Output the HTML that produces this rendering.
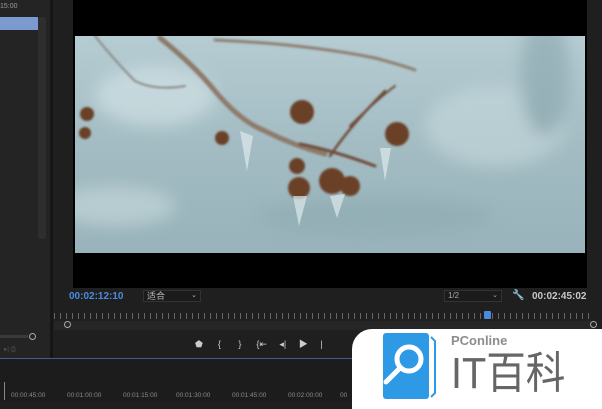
<!DOCTYPE html>
<html><head><meta charset="utf-8"><style>
*{margin:0;padding:0;box-sizing:border-box}
body{width:602px;height:402px;background:#1f1f1f;position:relative;overflow:hidden;font-family:"Liberation Sans","Noto Sans CJK SC",sans-serif}
.a{position:absolute}
.t{font-size:6.5px;color:#8a8a8a;white-space:nowrap}
</style></head><body>
<div class="a" style="left:0;top:0;width:50px;height:360px;background:#242424"></div>
<div class="a" style="left:0;top:3px;font-size:7px;color:#9a9a9a">15:00</div>
<div class="a" style="left:0;top:17px;width:38px;height:13px;background:#7b9bd0"></div>
<div class="a" style="left:38px;top:17px;width:8px;height:222px;background:#2e2e2e;border-radius:3px"></div>
<div class="a" style="left:50px;top:0;width:3px;height:360px;background:#161616"></div>
<div class="a" style="left:0;top:335px;width:28px;height:3px;background:#3a3a3a"></div>
<div class="a" style="left:29px;top:333px;width:7px;height:7px;border:1px solid #aaa;border-radius:50%"></div>
<div class="a t" style="left:4px;top:345px;color:#555">▸| ⎙</div>
<div class="a" style="left:73px;top:0;width:514px;height:288px;background:#000"></div>
<svg class="a" style="left:75px;top:36px" width="510" height="217" viewBox="0 0 510 217">
<defs><filter id="b"><feGaussianBlur stdDeviation="8"/></filter><filter id="s"><feGaussianBlur stdDeviation="1"/></filter>
<linearGradient id="g" x1="0" y1="0" x2="0" y2="1"><stop offset="0" stop-color="#b5ccd2"/><stop offset="0.5" stop-color="#a3bcc3"/><stop offset="1" stop-color="#98b3ba"/></linearGradient></defs>
<rect width="510" height="217" fill="url(#g)"/>
<g filter="url(#b)" opacity="0.6">
<ellipse cx="80" cy="60" rx="60" ry="30" fill="#d6e5e8"/>
<ellipse cx="420" cy="90" rx="70" ry="40" fill="#c6d9dd"/>
<ellipse cx="300" cy="180" rx="120" ry="20" fill="#8fabb2"/>
<ellipse cx="470" cy="40" rx="25" ry="60" fill="#8aa6ad"/>
<ellipse cx="40" cy="170" rx="60" ry="20" fill="#c8dadd"/>
</g>
<g fill="none" stroke-linecap="round" filter="url(#s)">
<path d="M85 2 Q120 30 140 55 Q165 85 190 95 Q220 110 250 118" stroke="#8d7a6a" stroke-width="5"/>
<path d="M140 4 Q230 8 300 22 Q330 30 340 34" stroke="#8f7f72" stroke-width="3"/>
<path d="M20 0 Q40 25 60 45 Q80 55 110 50" stroke="#8a8a88" stroke-width="2"/>
<path d="M225 108 Q260 115 300 130" stroke="#6e4a38" stroke-width="3"/>
<path d="M255 120 Q275 90 310 55" stroke="#6e4a38" stroke-width="2.5"/>
<path d="M275 90 Q300 65 320 50" stroke="#6e4a38" stroke-width="2"/>
</g>
<g fill="#6a3f28" filter="url(#s)">
<circle cx="227" cy="76" r="12"/><circle cx="322" cy="98" r="12"/>
<circle cx="224" cy="152" r="11"/><circle cx="257" cy="145" r="13"/><circle cx="275" cy="150" r="10"/>
<circle cx="222" cy="130" r="8"/><circle cx="147" cy="102" r="7"/>
<circle cx="12" cy="78" r="7"/><circle cx="10" cy="97" r="6"/>
</g>
<g fill="#dde9ec" opacity="0.7"><path d="M218 160 L224 190 L232 160Z"/><path d="M255 160 L262 182 L270 158Z"/><path d="M305 112 L310 145 L316 112Z"/><path d="M165 95 L172 135 L178 100Z"/></g>
</svg>
<div class="a" style="left:69px;top:291px;font-size:10px;font-weight:bold;color:#4a8be0">00:02:12:10</div>
<div class="a" style="left:143px;top:290px;width:58px;height:12px;border:1px solid #333;background:#1b1b1b;font-size:9px;color:#bbb;padding-left:3px;line-height:10px">适合<span style="float:right;margin-right:3px;font-size:7px">⌄</span></div>
<div class="a" style="left:444px;top:290px;width:58px;height:12px;border:1px solid #333;background:#1b1b1b;font-size:8px;color:#aaa;padding-left:3px;line-height:10px">1/2<span style="float:right;margin-right:3px;font-size:7px">⌄</span></div>
<div class="a" style="left:512px;top:290px;font-size:10px;color:#ccc">🔧</div>
<div class="a" style="left:532px;top:291px;font-size:10px;font-weight:bold;color:#c8c8c8">00:02:45:02</div>
<div class="a" style="left:54px;top:313px;width:540px;height:6px;background:repeating-linear-gradient(90deg,#666 0 1px,transparent 1px 6px)"></div>
<div class="a" style="left:54px;top:321px;width:540px;height:9px;background:#262626"></div>
<div class="a" style="left:64px;top:321px;width:7px;height:7px;border:1px solid #aaa;border-radius:50%"></div>
<div class="a" style="left:590px;top:321px;width:7px;height:7px;border:1px solid #aaa;border-radius:50%"></div>
<div class="a" style="left:484px;top:311px;width:7px;height:8px;background:#4a8be0;border-radius:1px"></div>
<div class="a" style="left:195px;top:337px;font-size:9px;color:#ccc;white-space:pre">⬟      {       }      {⇤     ◂|     ▶     |</div>
<div class="a" style="left:0;top:358px;width:602px;height:1px;background:#3d5f8f"></div>
<div class="a" style="left:0;top:359px;width:602px;height:43px;background:#1c1c1c"></div>
<div class="a" style="left:4px;top:382px;width:1px;height:18px;background:#888"></div>
<div class="a t" style="left:11px;top:392px">00:00:45:00</div>
<div class="a t" style="left:67px;top:392px">00:01:00:00</div>
<div class="a t" style="left:123px;top:392px">00:01:15:00</div>
<div class="a t" style="left:176px;top:392px">00:01:30:00</div>
<div class="a t" style="left:232px;top:392px">00:01:45:00</div>
<div class="a t" style="left:288px;top:392px">00:02:00:00</div>
<div class="a t" style="left:340px;top:392px">00</div>
<div class="a" style="left:352px;top:329px;width:260px;height:80px;background:#fff;border-radius:20px 0 0 0"></div>
<svg class="a" style="left:383px;top:333px" width="54" height="66" viewBox="0 0 54 66">
<rect x="0" y="0" width="46" height="66" rx="3" fill="#2e9ae6"/>
<path d="M48 4 L52 8 L52 60 L48 64" fill="none" stroke="#2e9ae6" stroke-width="2"/>
<circle cx="26" cy="26" r="12" fill="none" stroke="#fff" stroke-width="5"/>
<path d="M17 35 L3 49" stroke="#fff" stroke-width="5" stroke-linecap="round"/>
</svg>
<div class="a" style="left:451px;top:333px;font-size:13px;color:#8c8c8c;font-weight:bold">PConline</div>
<div class="a" style="left:451px;top:349px;font-size:44px;line-height:50px;color:#666;font-weight:normal;white-space:nowrap;transform:scaleX(0.9);transform-origin:left top">IT百科</div>
</body></html>
